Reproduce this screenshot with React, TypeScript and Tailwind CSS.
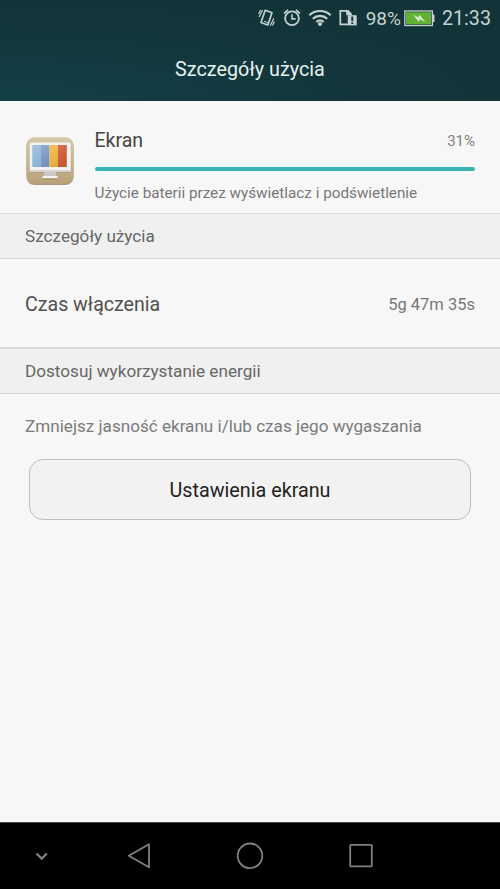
import React, { FC, ReactNode } from 'react'

const VibrateIcon = () => (
  <svg width="17" height="20" viewBox="0 0 17 20" fill="none" stroke="currentColor">
    <path d="M7.200 2.300 14 4.800 9.800 17 3 14.500z" strokeWidth="1.700" strokeLinejoin="round" />
    <path d="M4.600 2 1.100 9M2.600 2.100.6 6M12.200 17.800l3.600-7.200M14.500 17.600l1.900-4" strokeWidth="1.200" />
    <path d="m6 13.200 4.200 1.500" strokeWidth="1" />
  </svg>
)

const AlarmIcon = () => (
  <svg width="18" height="20" viewBox="0 0 18 20" fill="none" stroke="currentColor">
    <circle cx="9" cy="10.300" r="6.900" strokeWidth="1.800" />
    <path d="M9 6.300v4.600h3.600" strokeWidth="1.600" />
    <path d="M1 5.400 5 1.900M17 5.400 13 1.900" strokeWidth="1.800" />
  </svg>
)

const WifiIcon = () => (
  <svg width="24" height="20" viewBox="0 0 24 20" fill="none" stroke="currentColor">
    <path d="M1.300 7.200c6-5.600 15.400-5.600 21.400 0" strokeWidth="2.200" />
    <path d="M4.800 10.700c4.100-3.800 10.300-3.800 14.400 0" strokeWidth="2.200" />
    <path d="M8.300 14c2.200-1.900 5.200-1.900 7.400 0" strokeWidth="2.200" />
    <circle cx="12" cy="16" r="2" fill="currentColor" stroke="none" />
  </svg>
)

const SimAlertIcon = () => (
  <svg width="18" height="20" viewBox="0 0 18 20">
    <path
      d="M9 16.400H1.300V2.800h6.900l3.700 3.700"
      fill="none"
      stroke="currentColor"
      strokeWidth="1.700"
    />
    <path d="M7.200 2v5.200h5.600V5.400L9.200 2z" fill="currentColor" />
    <path d="M8.800 7.200h8.900v10.200H8.800z" fill="currentColor" />
    <path d="M12.300 8.500h2v4.700h-2zM12.300 14.400h2v1.700h-2z" fill="#12353a" />
  </svg>
)

const BatteryIcon = () => (
  <svg width="31" height="17" viewBox="0 0 31 17">
    <rect x=".8" y="1" width="27.600" height="14.500" fill="#12353a" stroke="#c5d2d2" strokeWidth="1.300" />
    <rect x="2" y="2.200" width="25.200" height="12.100" fill="#62b135" />
    <path d="M28.800 4.500h1.700v7.500h-1.700z" fill="#c5d2d2" />
    <path d="m9 4.500 5.500 2.900.7-2.700 6.300 7.300-5.800-2.800-.8 2.800z" fill="#dceccf" />
  </svg>
)

const ScreenIcon = () => (
  <svg width="50" height="50" viewBox="0 0 50 50">
    <defs>
      <linearGradient id="case" x1="0" y1="0" x2="0" y2="1">
        <stop offset="0" stopColor="#d6c8aa" />
        <stop offset="1" stopColor="#b9a279" />
      </linearGradient>
      <linearGradient id="shine" x1="0" y1="0" x2="1" y2="1">
        <stop offset="0" stopColor="#fff" stopOpacity=".28" />
        <stop offset=".5" stopColor="#fff" stopOpacity=".08" />
        <stop offset="1" stopColor="#000" stopOpacity=".08" />
      </linearGradient>
    </defs>
    <rect x="1.500" y="2" width="47" height="47" rx="8" fill="#a89878" />
    <rect x="1.500" y="1.300" width="47" height="46.500" rx="8" fill="url(#case)" />
    <path d="M5 35.500h40v1H5z" fill="#8f7d5c" opacity=".6" />
    <path d="M19.500 35h11l1 7h-13z" fill="#c9c9c7" />
    <path d="M17.500 40h15v2.500h-15z" fill="#f3f3f1" />
    <path d="M17.500 42.500h15v1h-15z" fill="#97845f" />
    <rect x="4.700" y="6.500" width="41" height="29.500" rx="1.500" fill="#f1f1ef" />
    <path d="M4.700 34h41v1a1 1 0 0 1-1 1h-39a1 1 0 0 1-1-1z" fill="#d4d3d0" />
    <path d="M7.300 9h8.700v22H7.300z" fill="#83b0d4" />
    <path d="M16 9h8.500v22H16z" fill="#7190c0" />
    <path d="M24.500 9H33v22h-8.500z" fill="#edb43c" />
    <path d="M33 9h8.800v22H33z" fill="#d35a35" />
    <path d="M7.300 9h34.500v22H7.300z" fill="url(#shine)" />
  </svg>
)

const SectionHeader: FC<{ children: ReactNode }> = ({ children }) => (
  <h2 className="flex h-[45px] items-center border-b border-[#d8d8d8] bg-[#f0f0f0] px-[25px] pt-[2px] text-[17.15px] text-[#666]">
    {children}
  </h2>
)

const StatusBar = () => (
  <div className="flex h-9 items-center justify-end pr-[9px] text-[#c5d2d2]">
    <div className="flex items-center">
      <span className="mr-[8px]"><VibrateIcon /></span>
      <span className="mr-[7px]"><AlarmIcon /></span>
      <span className="mr-[7px]"><WifiIcon /></span>
      <span className="mr-[9px]"><SimAlertIcon /></span>
    </div>
    <span className="pt-[2px] text-[19px]">98%</span>
    <span className="ml-[3px] mr-[7px]"><BatteryIcon /></span>
    <span className="pt-[2px] text-[19.7px]">21:33</span>
  </div>
)

const NavBar = () => (
  <nav className="h-[67px] border-t border-[#4a4a4a] bg-black">
    <svg width="500" height="66" viewBox="0 0 500 66" fill="none" stroke="#808080" strokeWidth="1.800">
      <path d="m36.500 30.500 5.200 5 5.200-5" strokeWidth="2.400" />
      <path d="M149 21.300v23L128.800 32.800z" strokeLinejoin="round" />
      <circle cx="250" cy="32.800" r="12.300" />
      <rect x="350.200" y="21.800" width="21.600" height="21.600" rx="1" />
    </svg>
  </nav>
)

export default function App() {
  return (
    <div className="flex h-[889px] w-[500px] flex-col bg-[#f7f7f7] font-['Roboto',sans-serif]">
      <header className="h-[101px] bg-[radial-gradient(ellipse_at_0%_100%,#134047_0%,#12363b_50%,#123338_100%)]">
        <StatusBar />
        <h1 className="flex h-[65px] items-center justify-center pt-[2px] text-[19.8px] text-[#e6f0f0]">
          Szczegóły użycia
        </h1>
      </header>

      <main className="flex-1">
        <section className="flex h-[113px] gap-[19.5px] border-b border-[#dcdcdc] pl-[25px] pr-[25px]">
          <div className="pt-[35px]">
            <ScreenIcon />
          </div>
          <div className="flex-1 pt-[26px]">
            <div className="flex h-[27px] items-center justify-between">
              <span className="text-[19.5px] text-[#444]">Ekran</span>
              <span className="pt-[2px] text-[15px] text-[#808080]">31%</span>
            </div>
            <div className="mt-[13px] h-1 rounded-full bg-[#3bb5b3]" />
            <p className="mt-[10px] text-[15.25px] leading-6 whitespace-nowrap text-[#777]">
              Użycie baterii przez wyświetlacz i podświetlenie
            </p>
          </div>
        </section>

        <SectionHeader>Szczegóły użycia</SectionHeader>
        <div className="flex h-[90px] items-center justify-between border-b-2 border-[#dadada] px-[25px] pt-[4px]">
          <span className="text-[19.6px] text-[#505050]">Czas włączenia</span>
          <span className="text-[16.5px] text-[#777]">5g 47m 35s</span>
        </div>

        <SectionHeader>Dostosuj wykorzystanie energii</SectionHeader>
        <p className="px-[25px] pt-5 text-[17.1px] leading-6 whitespace-nowrap text-[#7b7b7b]">
          Zmniejsz jasność ekranu i/lub czas jego wygaszania
        </p>
        <div className="px-[29px] pt-[21px]">
          <button className="h-[61px] w-full rounded-[14px] border border-[#bdbdbd] bg-[#f2f2f2] pt-[3px] text-[19.75px] text-[#222]">
            Ustawienia ekranu
          </button>
        </div>
      </main>

      <NavBar />
    </div>
  )
}
